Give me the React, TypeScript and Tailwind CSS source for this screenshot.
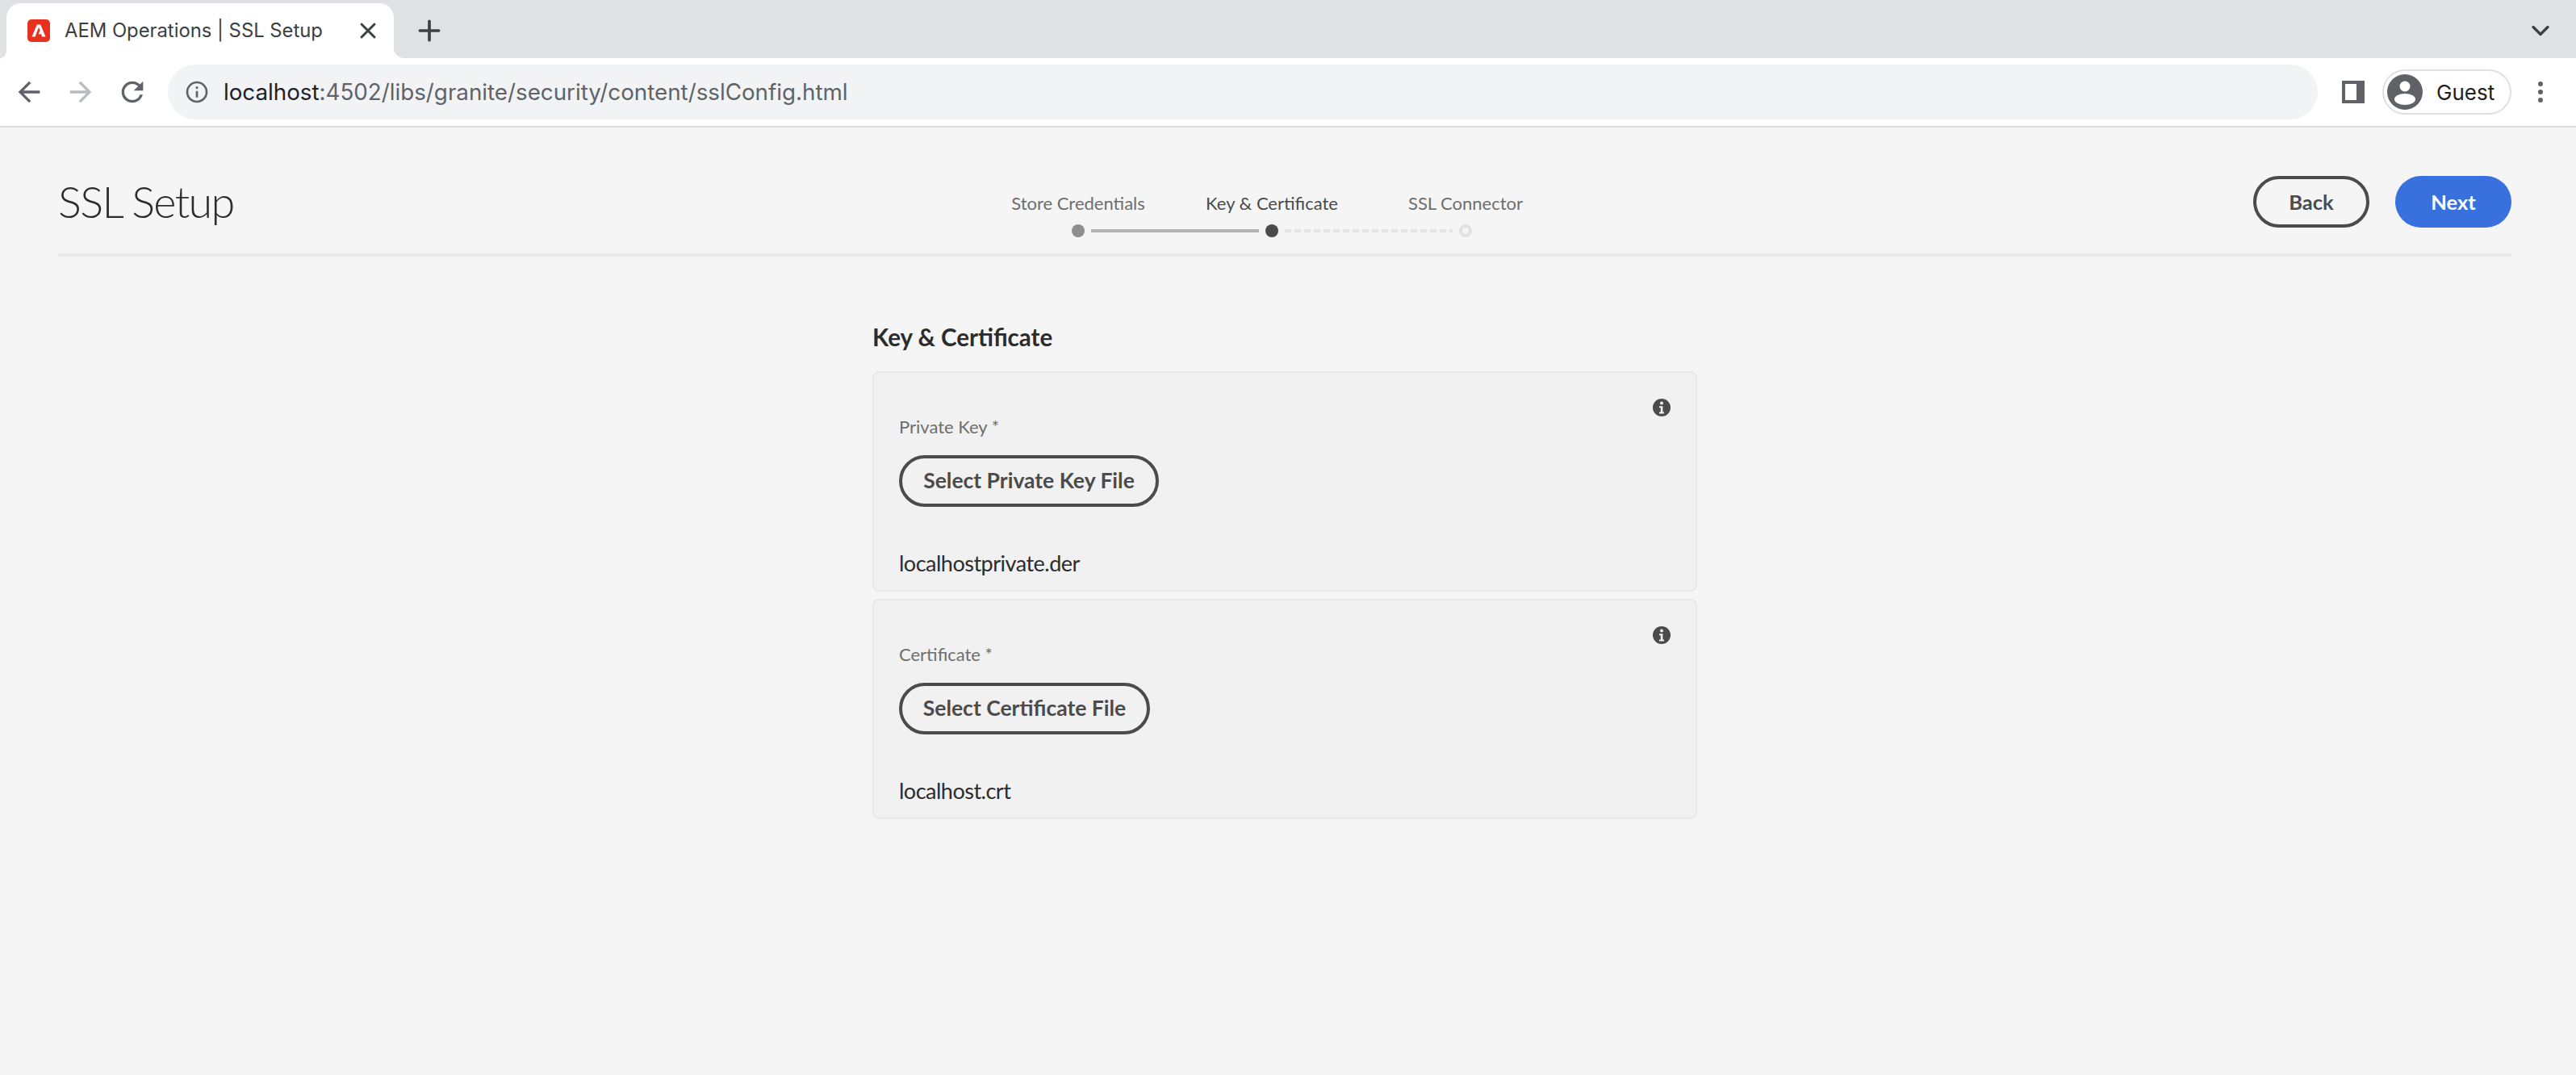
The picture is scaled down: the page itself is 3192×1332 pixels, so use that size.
import React from 'react';
import { Plus, X, ChevronDown } from 'lucide-react';

const AdobeFavicon = () => (
  <svg width="28" height="28" viewBox="0 0 28 28" className="shrink-0">
    <rect width="28" height="28" rx="5" fill="#e8321f" />
    <path d="M11.8 6.5h4.4L22.5 21.5h-4.3l-1.2-3.2h-3.4l2-4.6-1.6-4L9.6 21.5H5.5z" fill="#fff" />
  </svg>
);

const InfoDot = () => (
  <svg width="22" height="22" viewBox="0 0 22 22">
    <circle cx="11" cy="11" r="11" fill="#4b4b4b" />
    <circle cx="11" cy="5.6" r="2" fill="#f1f1f1" />
    <path d="M8 9.2h4.4v7.2H14v2H8v-2h1.8v-5.2H8z" fill="#f1f1f1" />
  </svg>
);

const NavIcon = ({ d, className }: { d: string; className: string }) => (
  <svg width="40" height="40" viewBox="0 0 24 24" fill="currentColor" className={className}>
    <path d={d} />
  </svg>
);

const FileField = ({ label, button, file, width }: { label: string; button: string; file: string; width: string }) => (
  <div className="relative h-[273px] rounded-lg border-2 border-[#e8e8e8] bg-[#f1f1f1] pl-[31px] pt-[50px]">
    <div className="absolute right-[31px] top-[32px]">
      <InfoDot />
    </div>
    <div className="h-[34px] text-[22px] leading-[34px] text-[#6e6e6e]">{label}</div>
    <button className={`mt-[18px] flex h-[64px] items-center justify-center rounded-full border-[4px] border-[#4b4b4b] text-[26.5px] font-bold text-[#4b4b4b] ${width}`}>
      {button}
    </button>
    <div className="mt-[52px] text-[27px] leading-[36px] tracking-[-0.5px] text-[#2c2c2c]">{file}</div>
  </div>
);

export default function App() {
  return (
    <div className="flex h-[1332px] w-[3192px] flex-col overflow-hidden bg-[#f5f5f5] font-['Lato',sans-serif]">
      {/* tab strip */}
      <div className="flex h-[72px] items-end bg-[#dfe1e5] pl-[8px] pr-[26px] font-['Inter',sans-serif]">
        <div className="relative flex h-[68px] w-[480px] items-center rounded-t-[18px] bg-white pl-[26px] pr-[16px]">
          <svg width="16" height="16" viewBox="0 0 16 16" className="absolute bottom-0 left-[-8px]">
            <path d="M8 0v16H0c5 0 8-4 8-10z" fill="#fff" />
          </svg>
          <svg width="16" height="16" viewBox="0 0 16 16" className="absolute bottom-0 right-[-14px]">
            <path d="M0 0v16h16C6 16 2 10 0 0z" fill="#fff" />
          </svg>
          <AdobeFavicon />
          <span className="ml-[18px] flex-1 text-[23.8px] text-[#3c4043]">AEM Operations | SSL Setup</span>
          <X size={32} strokeWidth={2.2} className="text-[#3c4043]" />
        </div>
        <Plus size={40} strokeWidth={2.2} className="mb-[14px] ml-[24px] text-[#3c4043]" />
        <ChevronDown size={36} strokeWidth={2.2} className="mb-[16px] ml-auto text-[#3c4043]" />
      </div>

      {/* toolbar */}
      <div className="flex h-[86px] items-center border-b-2 border-[#dadce0] bg-white pl-[16px] font-['Inter',sans-serif]">
        <NavIcon d="M20 11H7.83l5.59-5.59L12 4l-8 8 8 8 1.41-1.41L7.83 13H20v-2z" className="text-[#5f6368]" />
        <NavIcon d="M4 11h12.17l-5.59-5.59L12 4l8 8-8 8-1.41-1.41L16.17 13H4v-2z" className="ml-[24px] text-[#b9bbbe]" />
        <NavIcon
          d="M17.65 6.35A7.958 7.958 0 0 0 12 4c-4.42 0-7.99 3.58-7.99 8s3.57 8 7.99 8c3.73 0 6.84-2.55 7.73-6h-2.08A5.99 5.99 0 0 1 12 18c-3.31 0-6-2.69-6-6s2.69-6 6-6c1.66 0 3.14.69 4.22 1.78L13 11h7V4l-2.35 2.35z"
          className="ml-[24px] text-[#5f6368]"
        />
        <div className="ml-[24px] flex h-[68px] w-[2664px] items-center rounded-full bg-[#f1f3f4] pl-[20px]">
          <svg width="32" height="32" viewBox="0 0 24 24" fill="#5f6368">
            <path d="M11 7h2v2h-2zm0 4h2v6h-2zm1-9C6.48 2 2 6.48 2 12s4.48 10 10 10 10-4.48 10-10S17.52 2 12 2zm0 18c-4.41 0-8-3.59-8-8s3.59-8 8-8 8 3.59 8 8-3.59 8-8 8z" />
          </svg>
          <span className="ml-[17px] pt-[2px] text-[27.75px] text-[#5f6368]">
            <span className="text-[#202124]">localhost</span>:4502/libs/granite/security/content/sslConfig.html
          </span>
        </div>
        <div className="ml-[30px] h-[28px] w-[28px] border-y-[4px] border-l-[4px] border-r-[10px] border-[#5f6368]" />
        <div className="ml-[22px] flex h-[56px] w-[160px] items-center rounded-full border-2 border-[#e0e0e0] pl-[4px]">
          <svg width="44" height="44" viewBox="0 0 44 44">
            <circle cx="22" cy="22" r="22" fill="#5f6368" />
            <circle cx="22" cy="15" r="6.5" fill="#fff" />
            <ellipse cx="22" cy="31" rx="13" ry="7" fill="#fff" />
          </svg>
          <span className="ml-[17px] text-[26px] text-[#202124]">Guest</span>
        </div>
        <div className="ml-[33px] flex flex-col gap-[4px]">
          <span className="h-[6px] w-[6px] rounded-full bg-[#5f6368]" />
          <span className="h-[6px] w-[6px] rounded-full bg-[#5f6368]" />
          <span className="h-[6px] w-[6px] rounded-full bg-[#5f6368]" />
        </div>
      </div>

      {/* wizard header */}
      <div className="ml-[72px] mr-[80px] flex h-[160px] items-start border-b-4 border-[#ebebeb]">
        <h1 className="mt-[56px] w-[1144px] text-[54px] font-light leading-[72px] tracking-[-1.7px] text-[#2c2c2c]">SSL Setup</h1>
        <div className="mt-[77px] w-[720px]">
          <div className="grid grid-cols-3 text-center text-[22px] leading-[34px]">
            <span className="text-[#6e6e6e]">Store Credentials</span>
            <span className="text-[#4b4b4b]">Key &amp; Certificate</span>
            <span className="text-[#6e6e6e]">SSL Connector</span>
          </div>
          <div className="mt-[9px] flex items-center pl-[112px]">
            <span className="h-[16px] w-[16px] rounded-full bg-[#8e8e8e]" />
            <span className="mx-[8px] h-[4px] w-[208px] bg-[#b3b3b3]" />
            <span className="h-[16px] w-[16px] rounded-full bg-[#4b4b4b]" />
            <span className="mx-[8px] h-[4px] w-[208px] bg-[repeating-linear-gradient(90deg,#e5e5e5_0,#e5e5e5_8px,transparent_8px,transparent_12px)]" />
            <span className="h-[16px] w-[16px] rounded-full border-[4px] border-[#e1e1e1]" />
          </div>
        </div>
        <div className="mt-[60px] flex flex-1 justify-end gap-[32px]">
          <button className="h-[64px] w-[144px] rounded-full border-[4px] border-[#4b4b4b] text-[25.5px] font-bold text-[#4b4b4b]">Back</button>
          <button className="h-[64px] w-[144px] rounded-full bg-[#3871de] text-[25.5px] font-bold text-white">Next</button>
        </div>
      </div>

      {/* form */}
      <div className="ml-[1081px] mt-[80px] flex w-[1022px] flex-col">
        <h2 className="mb-[22px] h-[40px] text-[29.5px] font-bold leading-[40px] text-[#2c2c2c]">Key &amp; Certificate</h2>
        <div className="flex flex-col gap-[9px]">
          <FileField label="Private Key *" button="Select Private Key File" file="localhostprivate.der" width="w-[322px]" />
          <FileField label="Certificate *" button="Select Certificate File" file="localhost.crt" width="w-[311px]" />
        </div>
      </div>
    </div>
  );
}
